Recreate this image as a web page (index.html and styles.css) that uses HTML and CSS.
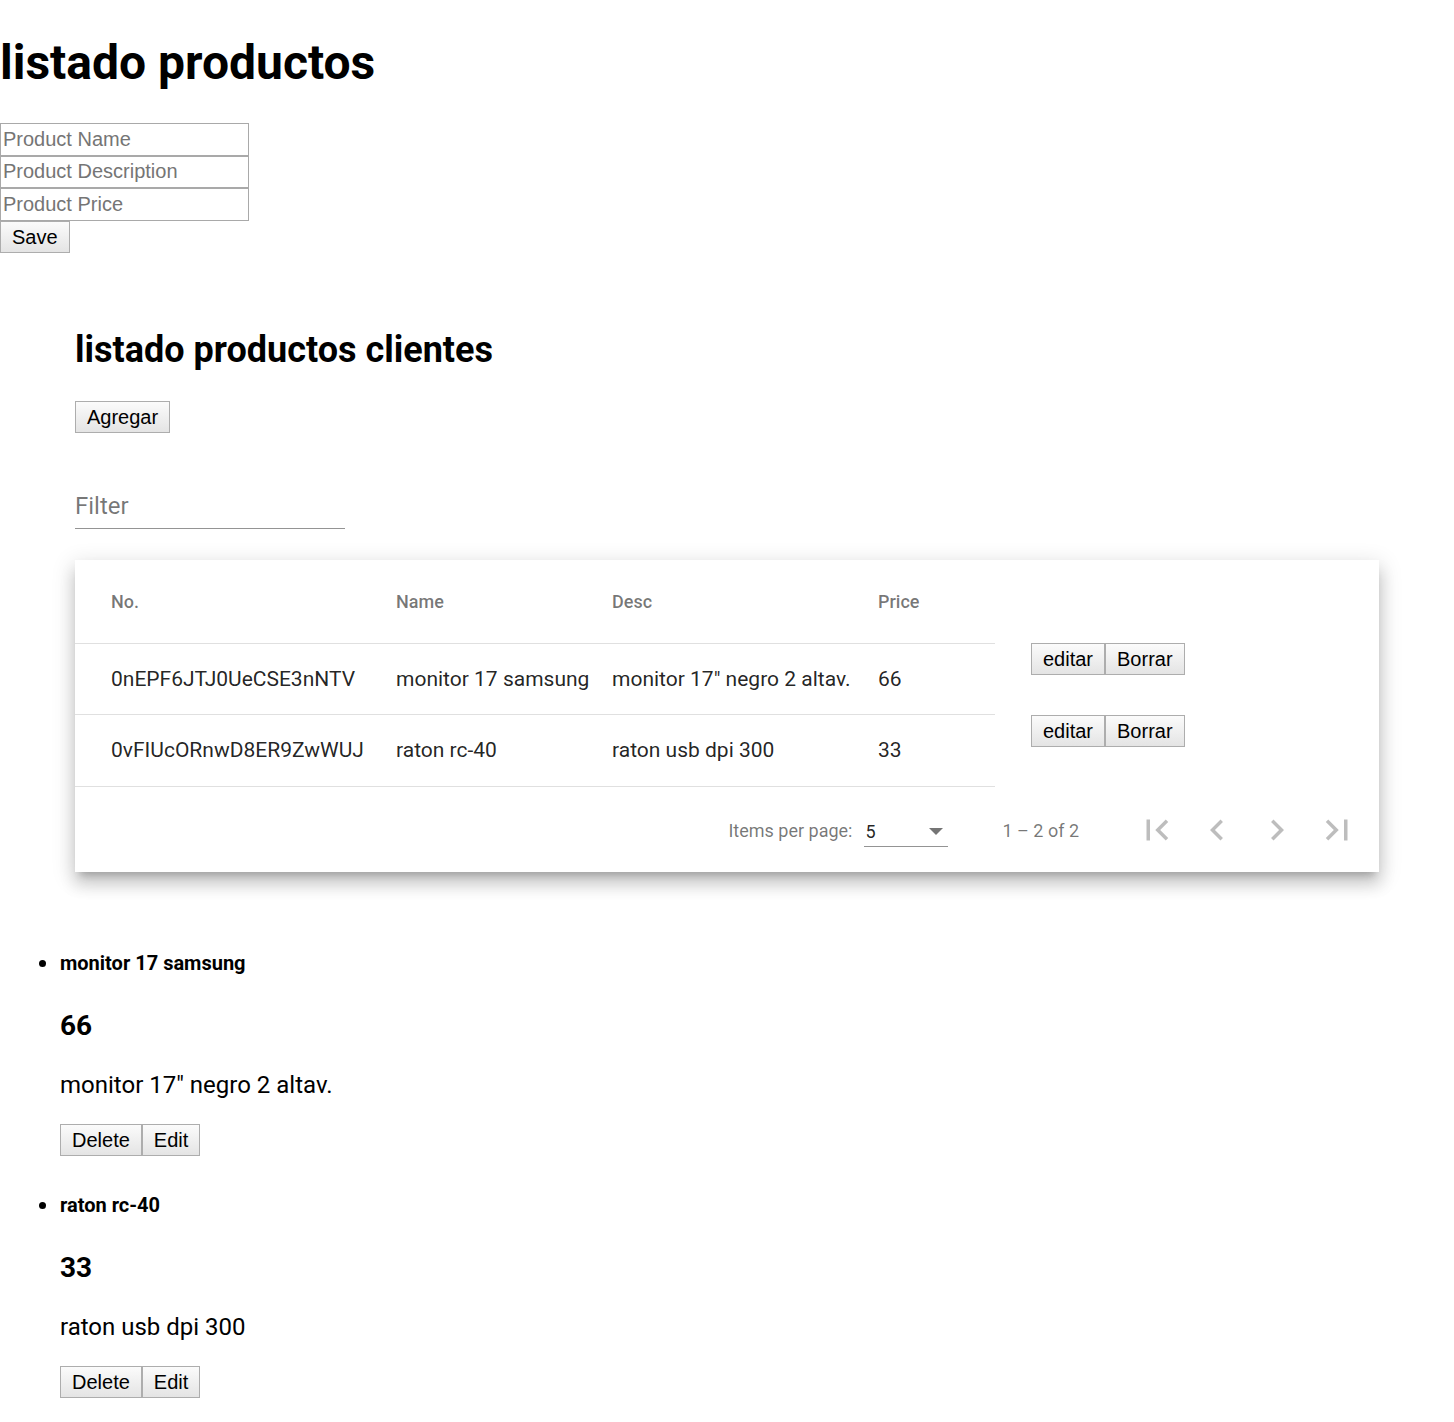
FILE: index.html
```html
<!DOCTYPE html>
<html lang="es">
<head>
<meta charset="utf-8">
<title>listado productos</title>
<link rel="stylesheet" href="styles.css">
</head>
<body>
<h1 class="title">listado productos</h1>
<form class="product-form">
  <input class="field" type="text" placeholder="Product Name">
  <input class="field" type="text" placeholder="Product Description">
  <input class="field" type="text" placeholder="Product Price">
  <div class="row"><button class="btn" type="button">Save</button></div>
</form>

<section class="clients">
  <h2 class="subtitle">listado productos clientes</h2>
  <div class="row"><button class="btn" type="button">Agregar</button></div>
  <div class="filter"><span class="filter-label">Filter</span></div>

  <div class="card">
    <table class="tbl">
      <colgroup>
        <col class="c-no"><col class="c-name"><col class="c-desc"><col class="c-price"><col>
      </colgroup>
      <thead>
        <tr><th class="first">No.</th><th>Name</th><th>Desc</th><th>Price</th><th class="act"></th></tr>
      </thead>
      <tbody>
        <tr>
          <td class="first">0nEPF6JTJ0UeCSE3nNTV</td><td>monitor 17 samsung</td><td>monitor 17" negro 2 altav.</td><td>66</td>
          <td class="act"><div class="btn-group"><button class="btn" type="button">editar</button><button class="btn" type="button">Borrar</button></div></td>
        </tr>
        <tr>
          <td class="first">0vFIUcORnwD8ER9ZwWUJ</td><td>raton rc-40</td><td>raton usb dpi 300</td><td>33</td>
          <td class="act"><div class="btn-group"><button class="btn" type="button">editar</button><button class="btn" type="button">Borrar</button></div></td>
        </tr>
      </tbody>
    </table>
    <div class="paginator">
      <div class="page-size">
        <span class="page-size-label">Items per page:</span>
        <div class="page-select"><span class="page-value">5</span><span class="arrow"></span></div>
      </div>
      <div class="range">1 – 2 of 2</div>
      <div class="nav">
        <span class="icon-btn"><svg viewBox="0 0 24 24" width="42" height="42"><path d="M18.41 16.59L13.82 12l4.59-4.59L17 6l-6 6 6 6zM6 6h2v12H6z"/></svg></span>
        <span class="icon-btn"><svg viewBox="0 0 24 24" width="42" height="42"><path d="M15.41 7.41L14 6l-6 6 6 6 1.41-1.41L10.83 12z"/></svg></span>
        <span class="icon-btn"><svg viewBox="0 0 24 24" width="42" height="42"><path d="M10 6L8.59 7.41 13.17 12l-4.58 4.59L10 18l6-6z"/></svg></span>
        <span class="icon-btn"><svg viewBox="0 0 24 24" width="42" height="42"><path d="M5.59 7.41L10.18 12l-4.59 4.59L7 18l6-6-6-6zM16 6h2v12h-2z"/></svg></span>
      </div>
    </div>
  </div>
</section>

<ul class="items">
  <li class="item">
    <h5 class="item-name">monitor 17 samsung</h5>
    <h3 class="item-price">66</h3>
    <p class="item-desc">monitor 17" negro 2 altav.</p>
    <div class="btn-group"><button class="btn" type="button">Delete</button><button class="btn" type="button">Edit</button></div>
  </li>
  <li class="item">
    <h5 class="item-name">raton rc-40</h5>
    <h3 class="item-price">33</h3>
    <p class="item-desc">raton usb dpi 300</p>
    <div class="btn-group"><button class="btn" type="button">Delete</button><button class="btn" type="button">Edit</button></div>
  </li>
</ul>
</body>
</html>
```

FILE: styles.css
```css
html, body {
  margin: 0;
  padding: 0;
  background: #fff;
}
body {
  font-family: Roboto, "Noto Sans", sans-serif;
  font-size: 24px;
  color: #000;
}

.title {
  font-size: 48px;
  font-weight: 700;
  line-height: 56px;
  margin: 35px 0 32px;
}

.product-form {
  display: flex;
  flex-direction: column;
  margin: 0;
}
.field {
  display: block;
  box-sizing: border-box;
  width: 249px;
  height: 32.5px;
  margin: 0;
  padding: 0 2px;
  border: 1px solid #a9a9a9;
  border-radius: 0;
  font-family: "Liberation Sans", Arial, sans-serif;
  font-size: 20px;
  color: #000;
  background: #fff;
  outline: none;
}
.field::placeholder {
  color: #757575;
}

.row {
  display: flex;
}

.btn {
  box-sizing: border-box;
  height: 32px;
  margin: 0;
  padding: 0 11px;
  border: 1px solid #adadad;
  border-radius: 0;
  background: linear-gradient(#fbfbfb, #e4e4e4);
  font-family: "Liberation Sans", Arial, sans-serif;
  font-size: 20px;
  color: #000;
  line-height: 30px;
}

.btn-group {
  display: flex;
}

.clients {
  padding: 0 75px 43px;
}
.subtitle {
  font-size: 36px;
  font-weight: 700;
  line-height: 42px;
  margin: 76px 0 30px;
}

.filter {
  width: 270px;
  height: 43px;
  margin: 52px 0 31.5px;
  border-bottom: 1.5px solid rgba(0, 0, 0, 0.42);
  display: flex;
  align-items: center;
}
.filter-label {
  font-size: 24px;
  color: rgba(0, 0, 0, 0.54);
}

.card {
  background: #fff;
  box-shadow: 0 7.5px 7.5px -4.5px rgba(0, 0, 0, 0.2),
              0 12px 15px 1.5px rgba(0, 0, 0, 0.14),
              0 4.5px 21px 3px rgba(0, 0, 0, 0.12);
}

.tbl {
  width: 100%;
  table-layout: fixed;
  border-collapse: collapse;
  border-spacing: 0;
}
.c-no { width: 321px; }
.c-name { width: 216px; }
.c-desc { width: 266px; }
.c-price { width: 117px; }

.tbl th,
.tbl td {
  padding: 0;
  text-align: left;
  vertical-align: middle;
  border-bottom: 1.5px solid rgba(0, 0, 0, 0.12);
  white-space: nowrap;
}
.tbl th {
  height: 82.5px;
  font-size: 18px;
  font-weight: 500;
  color: rgba(0, 0, 0, 0.54);
}
.tbl td {
  height: 70.5px;
  font-size: 21px;
  color: rgba(0, 0, 0, 0.87);
}
.tbl .first {
  padding-left: 36px;
}
.tbl .act {
  border-bottom: none;
  vertical-align: top;
  padding: 0 0 0 36px;
}

.paginator {
  box-sizing: border-box;
  display: flex;
  justify-content: flex-end;
  align-items: center;
  min-height: 85px;
  padding: 2px 12px 0;
  font-size: 18px;
  color: rgba(0, 0, 0, 0.54);
}
.page-size {
  display: flex;
  align-items: center;
  margin-right: 12px;
}
.page-size-label {
  margin: 0 6px;
}
.page-select {
  position: relative;
  top: 1.5px;
  box-sizing: border-box;
  width: 84px;
  height: 31.5px;
  margin: 0 6px;
  border-bottom: 1.5px solid rgba(0, 0, 0, 0.42);
  display: flex;
  align-items: center;
  justify-content: space-between;
}
.page-value {
  color: rgba(0, 0, 0, 0.87);
  padding-left: 1px;
}
.arrow {
  width: 0;
  height: 0;
  margin: 0 5px 0 0;
  border-left: 7.5px solid transparent;
  border-right: 7.5px solid transparent;
  border-top: 7.5px solid rgba(0, 0, 0, 0.54);
}
.range {
  margin: 0 48px 0 36px;
}
.nav {
  display: flex;
}
.icon-btn {
  width: 60px;
  height: 60px;
  display: flex;
  align-items: center;
  justify-content: center;
}
.icon-btn svg {
  fill: rgba(0, 0, 0, 0.26);
}

.items {
  margin: 24px 0 0;
  padding: 0 0 0 60px;
  font-size: 24px;
}
.item {
  padding-bottom: 1px;
}
.item-name {
  font-size: 20px;
  font-weight: 700;
  line-height: 23.4px;
  margin: 33.3px 0;
}
.item-price {
  font-size: 28px;
  font-weight: 700;
  line-height: 33px;
  margin: 28px 0 29px;
}
.item-desc {
  font-size: 24px;
  line-height: 28px;
  margin: 24px 0 25px;
}
```
